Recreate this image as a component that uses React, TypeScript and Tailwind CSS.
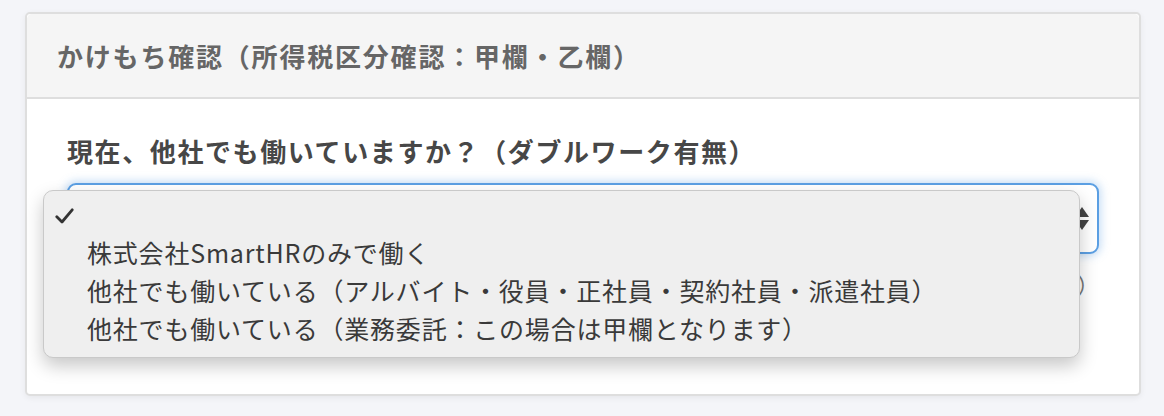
import React from 'react';

const font = { fontFamily: '"Noto Sans CJK JP", "Noto Sans", sans-serif' };

const options = [
  '株式会社SmartHRのみで働く',
  '他社でも働いている（アルバイト・役員・正社員・契約社員・派遣社員）',
  '他社でも働いている（業務委託：この場合は甲欄となります）',
];

const App: React.FC = () => {
  return (
    <div className="min-h-[416px] w-[1164px] bg-[#f4f5f9] pt-[12px] pl-[25px]" style={font}>
      <div className="w-[1116px] rounded-[5px] border-2 border-[#dedede] bg-white shadow-[0_2px_6px_rgba(0,0,0,0.06)]">
        {/* Card header */}
        <div className="flex h-[85px] items-center border-b-2 border-[#dedede] bg-[#f5f5f5] px-[30px] rounded-t-[5px]">
          <h2 className="text-[26px] font-bold tracking-[1.8px] text-[#666]">
            かけもち確認（所得税区分確認：甲欄・乙欄）
          </h2>
        </div>

        {/* Card body */}
        <div className="relative px-[40px] pt-[34px] pb-[96px]">
          <label className="block text-[26px] font-bold leading-[36px] tracking-[1.6px] text-[#474747]">
            現在、他社でも働いていますか？（ダブルワーク有無）
          </label>

          <div className="mt-[14px] flex h-[71px] items-center justify-end rounded-[9px] border-2 border-[#5b9fe3] bg-white pr-[8px] shadow-[0_0_8px_2px_rgba(91,159,227,0.35)]">
            <div className="flex flex-col items-center gap-[3px]">
              <div className="h-0 w-0 border-x-[7px] border-b-[10px] border-x-transparent border-b-[#444]" />
              <div className="h-0 w-0 border-x-[7px] border-t-[10px] border-x-transparent border-t-[#444]" />
            </div>
          </div>

          <p className="mt-[14px] text-right text-[22px] leading-[30px] text-[#777]">
            勤務先の情報（任意）
          </p>

          {/* Open dropdown menu */}
          <div className="absolute left-[16px] top-[91px] w-[1037px] rounded-[10px] border border-[#c9c9c9] bg-[#efefef] pt-[4px] pb-[10px] shadow-[0_8px_18px_rgba(0,0,0,0.22)]">
            <div className="flex h-[38px] items-center pl-[11px] pt-[4px]">
              <svg width="19" height="16" viewBox="0 0 19 16" fill="none">
                <path d="M1.8 8.8 L7 14 L17.2 1.8" stroke="#333" strokeWidth="2.8" strokeLinecap="round" strokeLinejoin="round" />
              </svg>
            </div>
            {options.map((o) => (
              <div key={o} className="h-[38px] pl-[43px] text-[25px] leading-[38px] tracking-[0.8px] text-[#3a3a3a]">
                {o}
              </div>
            ))}
          </div>
        </div>
      </div>
    </div>
  );
};

export default App;
